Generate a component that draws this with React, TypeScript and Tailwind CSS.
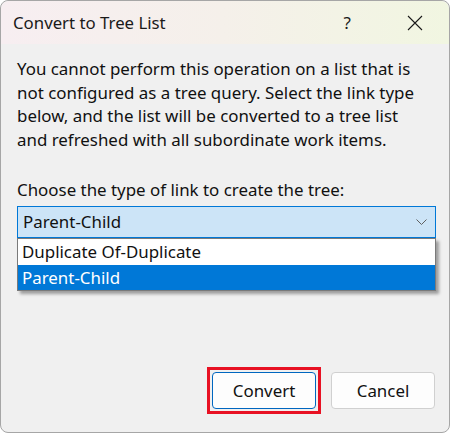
import { useState } from 'react';

const linkTypes = ['Duplicate Of-Duplicate', 'Parent-Child'];

const TitleBar = () => (
  <div className="flex h-[43px] items-center bg-gradient-to-r from-[#f7eef1] via-[#f5f0ea] to-[#f1f6e1] rounded-t-[8px]">
    <span className="ml-[12px] text-[16.8px] text-[#1a1a1a]">Convert to Tree List</span>
    <span className="ml-auto mr-[56px] text-[17px] text-[#1a1a1a]">?</span>
    <svg className="mr-[26px]" width="16" height="16" viewBox="0 0 16 16">
      <path d="M1 1 L15 15 M15 1 L1 15" stroke="#1a1a1a" strokeWidth="1.1" />
    </svg>
  </div>
);

const App = () => {
  const [selected] = useState('Parent-Child');

  return (
    <div className="w-[451px] h-[435px] bg-white" style={{ fontFamily: '"Noto Sans", "Open Sans", sans-serif' }}>
      <div className="flex flex-col w-[450px] h-[433px] border border-[#a6a6a6] rounded-[8px] bg-[#f0f0f0] overflow-hidden">
        <TitleBar />
        <div className="flex flex-col flex-1 px-[16px]">
          <p className="mt-[13px] text-[16.9px] leading-[23.5px] text-[#111] whitespace-nowrap">
            You cannot perform this operation on a list that is<br />
            not configured as a tree query. Select the link type<br />
            below, and the list will be converted to a tree list<br />
            and refreshed with all subordinate work items.
          </p>
          <p className="mt-[27px] text-[16.9px] leading-[23px] text-[#111]">
            Choose the type of link to create the tree:
          </p>
          <div className="relative mt-[5px] w-[419px]">
            <div className="flex h-[32px] items-center border border-[#0078d7] bg-[#cce4f7] pl-[5px] pr-[8px]">
              <span className="text-[16.9px] text-[#111]">{selected}</span>
              <svg className="ml-auto" width="11" height="6" viewBox="0 0 11 6">
                <path d="M0.5 0.5 L5.5 5.5 L10.5 0.5" fill="none" stroke="#606060" strokeWidth="1" />
              </svg>
            </div>
            <ul className="absolute left-0 top-[32px] w-[419px] border border-[#7a7a7a] bg-white shadow-[3px_3px_3px_rgba(0,0,0,0.35)]">
              {linkTypes.map(t => (
                <li
                  key={t}
                  className={t === selected
                    ? 'h-[25px] pl-[4px] leading-[25px] text-[16.9px] bg-[#0078d7] text-white'
                    : 'h-[26px] pl-[4px] leading-[26px] text-[16.9px] text-[#111]'}>
                  {t}
                </li>
              ))}
            </ul>
          </div>
          <div className="mt-auto mb-[18px] flex items-center justify-end gap-[10px] mr-[-2px]">
            <div className="border-[3px] border-[#e81123] p-[2px]">
              <button className="block w-[104px] h-[37px] rounded-[4px] border border-[#0067c0] bg-[#fdfdfd] text-[16.9px] text-[#111]">
                Convert
              </button>
            </div>
            <button className="w-[104px] h-[37px] rounded-[4px] border border-[#d0d0d0] bg-[#fdfdfd] text-[16.9px] text-[#111]">
              Cancel
            </button>
          </div>
        </div>
      </div>
    </div>
  );
};

export default App;
